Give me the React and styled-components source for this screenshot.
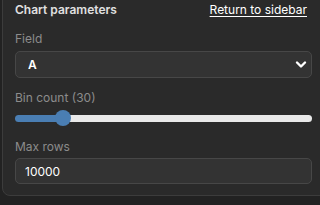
import React, { useState } from 'react';
import styled, { createGlobalStyle } from 'styled-components';

const GlobalStyle = createGlobalStyle`
  html, body {
    margin: 0;
    padding: 0;
    background: #222222;
    overflow: hidden;
    font-family: Inter, "Noto Sans", "Liberation Sans", sans-serif;
  }
`;

const Panel = styled.section`
  margin: -12px -12px 0 2px;
  padding: 12px 19px 11px 12px;
  background: #2a2a2a;
  border: 1px solid #3c3c3c;
  border-radius: 8px;
  display: flex;
  flex-direction: column;
`;

const Header = styled.div`
  display: flex;
  justify-content: space-between;
  align-items: center;
  height: 18px;
  line-height: 20px;
`;

const Title = styled.h3`
  margin: 0;
  font-size: 12px;
  font-weight: 600;
  color: #e0e0e0;
`;

const BackLink = styled.a`
  font-size: 12px;
  color: #ffffff;
  text-decoration: underline;
  text-underline-offset: 2px;
  margin-right: 5px;
  cursor: pointer;
`;

const Field = styled.div`
  display: flex;
  flex-direction: column;
  margin-top: ${p => p.$top}px;
`;

const Label = styled.label`
  font-size: 12px;
  color: #8c8c8c;
  line-height: 18px;
  height: 16px;
  margin-bottom: ${p => p.$gap}px;
`;

const Select = styled.select`
  appearance: none;
  display: block;
  height: 27px;
  width: 100%;
  box-sizing: border-box;
  padding: 0 12px;
  border-radius: 5px;
  border: 1px solid #474747;
  background: #333333;
  color: #ffffff;
  font-family: inherit;
  font-size: 12px;
  font-weight: 600;
`;

const SelectWrap = styled.div`
  position: relative;
`;

const Chevron = styled.svg`
  position: absolute;
  right: 5px;
  top: 9px;
  pointer-events: none;
`;

const Range = styled.input`
  appearance: none;
  -webkit-appearance: none;
  display: block;
  width: 100%;
  height: 16px;
  margin: 0;
  background: transparent;

  &::-webkit-slider-runnable-track {
    height: 7px;
    border-radius: 4px;
    background: linear-gradient(
      to right,
      #4a7eb3 0%,
      #4a7eb3 ${p => p.$pct}%,
      #e9e9e9 ${p => p.$pct}%,
      #e9e9e9 100%
    );
  }

  &::-webkit-slider-thumb {
    -webkit-appearance: none;
    width: 16px;
    height: 16px;
    border-radius: 50%;
    background: #4a7eb3;
    margin-top: -4.5px;
    border: none;
  }
`;

const TextInput = styled.input`
  display: block;
  height: 26px;
  width: 100%;
  box-sizing: border-box;
  padding: 0 9px;
  border-radius: 5px;
  border: 1px solid #474747;
  background: #333333;
  color: #ffffff;
  font-family: inherit;
  font-size: 12px;
  outline: none;
`;

export default function App() {
  const [bins, setBins] = useState(30);
  const min = 10;
  const max = 150;
  const pct = ((bins - min) / (max - min)) * 100;

  return (
    <>
      <GlobalStyle />
      <Panel>
        <Header>
          <Title>Chart parameters</Title>
          <BackLink>Return to sidebar</BackLink>
        </Header>
        <Field $top={11}>
          <Label $gap={5}>Field</Label>
          <SelectWrap>
            <Select defaultValue="A">
              <option>A</option>
              <option>B</option>
            </Select>
            <Chevron width="12" height="9" viewBox="0 0 12 9">
              <path d="M2 2.5 L6 6.5 L10 2.5" stroke="#fff" strokeWidth="2.4" fill="none" strokeLinecap="round" strokeLinejoin="round" />
            </Chevron>
          </SelectWrap>
        </Field>
        <Field $top={11}>
          <Label $gap={5}>Bin count ({bins})</Label>
          <Range
            type="range"
            min={min}
            max={max}
            value={bins}
            $pct={pct}
            onChange={e => setBins(Number(e.target.value))}
          />
        </Field>
        <Field $top={12}>
          <Label $gap={4}>Max rows</Label>
          <TextInput defaultValue="10000" />
        </Field>
      </Panel>
    </>
  );
}
